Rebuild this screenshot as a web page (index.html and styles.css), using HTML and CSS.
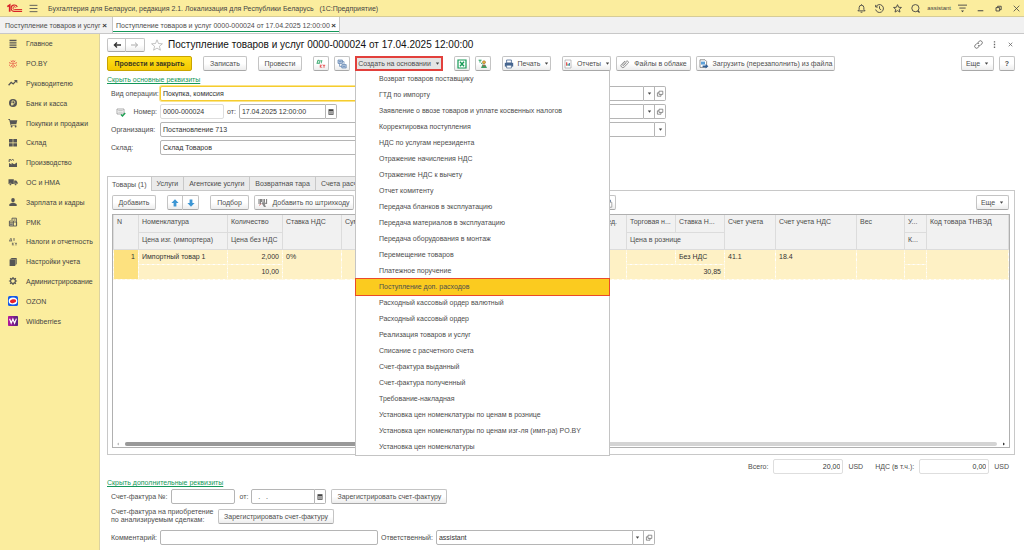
FILE: index.html
```html
<!DOCTYPE html>
<html lang="ru">
<head>
    <meta charset="UTF-8">
    <meta name="viewport" content="width=device-width, initial-scale=1.0">
    <title>Поступление товаров и услуг</title>
    <link rel="stylesheet" href="styles.css">
</head>
<body>
    <!-- shared icons -->
    <svg class="defs" aria-hidden="true">
        <symbol id="i-caret" viewBox="0 0 5 5"><path d="M0.8 1.6h3.4L2.5 3.8z" fill="#444"/></symbol>
        <symbol id="i-open" viewBox="0 0 8 8"><path d="M3 1.2h3.8v3.2H3zM3 2.8H1.4v3.4h3.6V4.4" fill="none" stroke="#666" stroke-width="0.7"/></symbol>
        <symbol id="i-cal" viewBox="0 0 8 8"><path d="M1.5 1.2h5v5.6h-5z" fill="#444"/><path d="M2.2 3h3.6v3.1H2.2z" fill="#ccc"/><path d="M2.2 4h3.6M2.2 5h3.6M3.4 3v3.1M4.6 3v3.1" stroke="#666" stroke-width="0.3"/></symbol>
    </svg>

    <header class="titlebar">
        <svg class="logo" viewBox="0 0 16 10">
            <path d="M0.8 3.6L3.2 2V8.8" fill="none" stroke="#d8232a" stroke-width="1.7"/>
            <path d="M10.8 4A3.2 3.2 0 1 0 8 8.4H15.6" fill="none" stroke="#d8232a" stroke-width="1.1"/>
            <path d="M9.2 4.6A1.4 1.4 0 1 0 8 6.5H15.6" fill="none" stroke="#d8232a" stroke-width="0.9"/>
        </svg>
        <button class="icon-btn" aria-label="Меню"><svg viewBox="0 0 8 8"><path d="M0.5 1.2h7M0.5 4h7M0.5 6.8h7" stroke="#555" stroke-width="0.8"/></svg></button>
        <span class="app-name">Бухгалтерия для Беларуси, редакция 2.1. Локализация для Республики Беларусь &nbsp; (1С:Предприятие)</span>
        <div class="title-tools">
            <button class="icon-btn" aria-label="Оповещения"><svg viewBox="0 0 8 8"><path d="M0.8 6.1h6.4L6.1 4.8V3.2a2.1 2.1 0 0 0-4.2 0v1.6zM3.2 7.3h1.6M4 0.3v0.8" fill="none" stroke="#444" stroke-width="0.8"/></svg></button>
            <button class="icon-btn" aria-label="История"><svg viewBox="0 0 8 8"><path d="M0.9 2.4a3.5 3.5 0 1 1-0.3 2.5M0.6 0.8v1.9h1.9M4 2v2.2l1.5 1" fill="none" stroke="#444" stroke-width="0.8"/></svg></button>
            <button class="icon-btn" aria-label="Избранное"><svg viewBox="0 0 8 8"><path d="M4 0.6l1 2.3 2.5 0.2-1.9 1.6 0.6 2.5L4 5.9 1.8 7.2l0.6-2.5L0.5 3.1 3 2.9z" fill="none" stroke="#444" stroke-width="0.8"/></svg></button>
            <button class="icon-btn" aria-label="Поиск"><svg viewBox="0 0 8 8"><circle cx="3.9" cy="3.7" r="3.2" fill="none" stroke="#444" stroke-width="0.8"/><path d="M6 6l1.6 1.6" stroke="#444" stroke-width="1.1"/></svg></button>
            <span class="user">assistant</span>
            <button class="icon-btn" aria-label="Настройки"><svg viewBox="0 0 8 8"><path d="M0 1h8M1.2 3.6h5.6" stroke="#444" stroke-width="0.8"/><path d="M2.6 5.8h2.8L4 7.4z" fill="#444"/></svg></button>
            <button class="icon-btn" aria-label="Свернуть"><svg viewBox="0 0 8 8"><path d="M1.5 6h5" stroke="#444" stroke-width="0.9"/></svg></button>
            <button class="icon-btn" aria-label="Развернуть"><svg viewBox="0 0 8 8"><path d="M1.8 3.2h3.2v3H1.8zM3.2 3V2h3.2v3H5.2" fill="none" stroke="#444" stroke-width="0.8"/></svg></button>
            <button class="icon-btn" aria-label="Закрыть"><svg viewBox="0 0 8 8"><path d="M1.5 1.5l5 5M6.5 1.5l-5 5" stroke="#444" stroke-width="0.7"/></svg></button>
        </div>
    </header>

    <nav class="windows">
        <a class="win" href="#">Поступление товаров и услуг <b>×</b></a>
        <a class="win win-on" href="#">Поступление товаров и услуг 0000-000024 от 17.04.2025 12:00:00 <b>×</b></a>
    </nav>

    <div class="work">
        <nav class="sidebar">
            <a href="#"><svg viewBox="0 0 10 10"><path d="M1.5 1.5h7M1.5 3.8h7M1.5 6.1h7M1.5 8.4h7" stroke="#555" stroke-width="1.3"/></svg>Главное</a>
            <a href="#"><svg viewBox="0 0 10 10"><path d="M5 1v2.4M5 6.4V9M3.6 4.6L1 3.6M6.4 4.6L9 3.6M4 6L2.4 8.2M6 6l1.6 2.2M3 1.6l1 1.7M7 1.6L6 3.3M1 6.2h1M8 6.2h1" stroke="#e2423a" stroke-width="0.8"/><circle cx="5" cy="4.9" r="0.8" fill="#e2423a"/></svg>PO.BY</a>
            <a href="#"><svg viewBox="0 0 10 10"><path d="M0.6 7.3l2.6-3 2 1.6 2.6-2.8" fill="none" stroke="#555" stroke-width="1.3"/><path d="M5.9 2h3.4v3.2z" fill="#555"/></svg>Руководителю</a>
            <a href="#"><svg viewBox="0 0 10 10"><circle cx="5" cy="5" r="4" fill="#555"/><path d="M4 7.6V2.9h1.5a1.3 1.3 0 0 1 0 2.7H3M3 6.6h2.6" fill="none" stroke="#fbed9e" stroke-width="0.8"/></svg>Банк и касса</a>
            <a href="#"><svg viewBox="0 0 10 10"><path d="M0.4 1h1.5l0.4 1.2h7L8.4 6H3.1l0.2 0.8h5v0.8H2.6L1.3 1.9H0.4z" fill="#555"/><circle cx="3.6" cy="8.5" r="0.9" fill="#555"/><circle cx="7.6" cy="8.5" r="0.9" fill="#555"/></svg>Покупки и продажи</a>
            <a href="#"><svg viewBox="0 0 10 10"><path d="M1 1h3.7v3.6H1zM5.3 1H9v3.6H5.3zM1 5.2h3.7v3.4H1zM5.3 5.2H9v3.4H5.3z" fill="#555"/></svg>Склад</a>
            <a href="#"><svg viewBox="0 0 10 10"><path d="M1 9V5l2.6 1.4V4.7l2.6 1.6L9 4.6V9z" fill="#555"/><path d="M1.2 4V1.6h1.6l0.4 1 1.2-1.2 1.6 1" fill="none" stroke="#555" stroke-width="1"/></svg>Производство</a>
            <a href="#"><svg viewBox="0 0 10 10"><path d="M0.5 2.2h5.3v4.8H0.5zM6.2 3.4h2l1.4 1.8v1.8H6.2z" fill="#555"/><circle cx="2.4" cy="7.3" r="1.1" fill="#555" stroke="#fbed9e" stroke-width="0.4"/><circle cx="7.6" cy="7.3" r="1.1" fill="#555" stroke="#fbed9e" stroke-width="0.4"/></svg>ОС и НМА</a>
            <a href="#"><svg viewBox="0 0 10 10"><ellipse cx="5" cy="3.1" rx="1.8" ry="2.2" fill="#555"/><path d="M1.3 9V7.5c0-0.8 1.8-1.2 2.6-1.8h2.2c0.8 0.6 2.6 1 2.6 1.8V9z" fill="#555"/></svg>Зарплата и кадры</a>
            <a href="#"><svg viewBox="0 0 10 10"><path d="M4 3V1.2h4.4v7.4M1.4 4h4v5h-4zM5.4 5h3.2v4H5.4M1.4 5.8h4M5.6 3h1.8" fill="none" stroke="#555" stroke-width="0.9"/><path d="M2 6.5h2.8v2H2z" fill="#777"/></svg>РМК</a>
            <a href="#"><svg viewBox="0 0 10 10"><path d="M1 4h3.2M1.7 4l0.7-2.4h1V4M5.2 1.8h1.6M6 1.8V4M4.4 5.6v2.8M6 5.6L4.6 7l1.5 1.4M7 6.3h2M8 6.3v2.2" fill="none" stroke="#555" stroke-width="0.7"/></svg>Налоги и отчетность</a>
            <a href="#"><svg viewBox="0 0 10 10"><path d="M3.2 1h5.5v6.2H7.9V1.9H3.2zM1.6 2.6h5.6V9H1.6z" fill="#555"/><path d="M2 2.2h5.6v6" fill="none" stroke="#555" stroke-width="0.6"/></svg>Настройки учета</a>
            <a href="#"><svg viewBox="0 0 10 10"><circle cx="5" cy="5" r="2.4" fill="none" stroke="#555" stroke-width="1.2"/><path d="M5 0.9v1.6M5 7.5v1.6M0.9 5h1.6M7.5 5h1.6M2.1 2.1l1.1 1.1M6.8 6.8l1.1 1.1M7.9 2.1L6.8 3.2M3.2 6.8L2.1 7.9" stroke="#555" stroke-width="1.2"/></svg>Администрирование</a>
            <a href="#"><svg viewBox="0 0 10 10"><rect width="10" height="10" rx="1.6" fill="#1459e8"/><ellipse cx="5" cy="5" rx="4.3" ry="3.6" fill="#fff"/><ellipse cx="5" cy="5.2" rx="3.1" ry="1.9" fill="#e8202c" transform="rotate(-12 5 5)"/></svg>OZON</a>
            <a href="#"><svg viewBox="0 0 10 10"><defs><linearGradient id="wb"><stop offset="0" stop-color="#b3169c"/><stop offset="1" stop-color="#54217f"/></linearGradient></defs><rect width="10" height="10" rx="0.8" fill="url(#wb)"/><path d="M1.6 2.8l1.6 4.4L4.9 3l1.7 4.2 1.8-4.6" fill="none" stroke="#fff" stroke-width="1.2"/></svg>Wildberries</a>
        </nav>

        <main class="doc">
            <div class="doc-head">
                <div class="pair">
                    <button class="btn" aria-label="Назад"><svg viewBox="0 0 8 8"><path d="M8 4H1.5M4 1.6L1.4 4 4 6.4" fill="none" stroke="#333" stroke-width="1.3"/></svg></button><button class="btn" aria-label="Вперед"><svg viewBox="0 0 8 8"><path d="M0 4h6.5M4 1.6L6.6 4 4 6.4" fill="none" stroke="#aaa" stroke-width="1"/></svg></button>
                </div>
                <svg class="star" viewBox="0 0 12 12"><path d="M6 0.8l1.5 3.7 3.9 0.3-3 2.5 1 3.9L6 9.1l-3.4 2.1 1-3.9-3-2.5 3.9-0.3z" fill="#fff" stroke="#aaa" stroke-width="0.7"/></svg>
                <h1>Поступление товаров и услуг 0000-000024 от 17.04.2025 12:00:00</h1>
                <div class="doc-tools">
                    <button class="icon-btn" aria-label="Ссылка"><svg viewBox="0 0 8 8"><path d="M3.4 2.4l1.2-1.2a1.6 1.6 0 0 1 2.3 2.3L5.6 4.8a1.5 1.5 0 0 1-2.1 0M4.6 5.6L3.4 6.8a1.6 1.6 0 0 1-2.3-2.3l1.3-1.3a1.5 1.5 0 0 1 2.1 0" fill="none" stroke="#666" stroke-width="0.8"/></svg></button>
                    <button class="icon-btn" aria-label="Еще"><svg viewBox="0 0 8 8"><path d="M3.4 1h1.2v1.2H3.4zM3.4 3.4h1.2v1.2H3.4zM3.4 5.8h1.2V7H3.4z" fill="#666"/></svg></button>
                    <button class="icon-btn" aria-label="Закрыть"><svg viewBox="0 0 8 8"><path d="M2.4 2.4l3.2 3.2M5.6 2.4L2.4 5.6" stroke="#666" stroke-width="0.7"/></svg></button>
                </div>
            </div>

            <div class="toolbar">
                <button class="btn btn-main">Провести и закрыть</button>
                <button class="btn w-write">Записать</button>
                <button class="btn w-write">Провести</button>
                <div class="group">
                    <button class="btn sq" aria-label="ДтКт"><svg viewBox="0 0 10 10"><path d="M0.6 4.3h3.2M1.2 4.2l0.6-2.9h1.5v2.9M4.2 1.8h2.2M5.3 1.8v2.5" fill="none" stroke="#169a56" stroke-width="0.8"/><path d="M4.3 5.6v3.2M6 5.6L4.5 7.2 6 8.8M6.8 6.3H9.2M8 6.3v2.5" fill="none" stroke="#e23a3a" stroke-width="0.8"/></svg></button>
                    <button class="btn sq" aria-label="Структура подчиненности"><svg viewBox="0 0 10 10"><path d="M1 1h4.4v3.4H1zM4.8 5.6h4.4V9H4.8z" fill="#b9cbe2" stroke="#5a7fae" stroke-width="0.7"/><path d="M2.6 4.4v3h2.2M7 5.6V2.6H5.4M2 2.6h2.4M5.8 7.4h2.4" fill="none" stroke="#5a7fae" stroke-width="0.7"/></svg></button>
                    <div class="drop">
                        <button class="btn btn-open">Создать на основании <svg class="caret"><use href="#i-caret"/></svg></button>
                        <ul class="menu">
                            <li>Возврат товаров поставщику</li>
                            <li>ГТД по импорту</li>
                            <li>Заявление о ввозе товаров и уплате косвенных налогов</li>
                            <li>Корректировка поступления</li>
                            <li>НДС по услугам нерезидента</li>
                            <li>Отражение начисления НДС</li>
                            <li>Отражение НДС к вычету</li>
                            <li>Отчет комитенту</li>
                            <li>Передача бланков в эксплуатацию</li>
                            <li>Передача материалов в эксплуатацию</li>
                            <li>Передача оборудования в монтаж</li>
                            <li>Перемещение товаров</li>
                            <li>Платежное поручение</li>
                            <li class="current">Поступление доп. расходов</li>
                            <li>Расходный кассовый ордер валютный</li>
                            <li>Расходный кассовый ордер</li>
                            <li>Реализация товаров и услуг</li>
                            <li>Списание с расчетного счета</li>
                            <li>Счет-фактура выданный</li>
                            <li>Счет-фактура полученный</li>
                            <li>Требование-накладная</li>
                            <li>Установка цен номенклатуры по ценам в рознице</li>
                            <li>Установка цен номенклатуры по ценам изг-ля (имп-ра) PO.BY</li>
                            <li>Установка цен номенклатуры</li>
                        </ul>
                    </div>
                </div>
                <div class="group">
                    <button class="btn sq" aria-label="Excel"><svg viewBox="0 0 10 10"><path d="M1 1h8v8H1z" fill="#fff" stroke="#169a56" stroke-width="1.2"/><path d="M3 2.8l4 4.4M7 2.8L3 7.2" stroke="#169a56" stroke-width="1.4"/></svg></button>
                    <button class="btn sq" aria-label="Сотрудники"><svg viewBox="0 0 10 10"><path d="M0.6 1.2h3M2 1.2v2.4M3 4l1.6 1" stroke="#169a56" stroke-width="0.9"/><circle cx="6" cy="3.2" r="1.5" fill="#e8b23a" stroke="#8a5a1e" stroke-width="0.5"/><path d="M3 9l1.4-3.2h3L9 9z" fill="#3f9d63"/><path d="M5 5.8h1.8L6 8z" fill="#e2423a"/></svg></button>
                </div>
                <button class="btn w-print"><svg viewBox="0 0 10 10"><path d="M2.6 1h4.8v3H2.6z" fill="#fff" stroke="#46658f" stroke-width="0.8"/><path d="M0.8 3.8h8.4v3.8H0.8z" fill="#46658f"/><path d="M2.6 6.2h4.8V9H2.6z" fill="#fff" stroke="#46658f" stroke-width="0.7"/></svg>Печать <svg class="caret"><use href="#i-caret"/></svg></button>
                <div class="group">
                    <button class="btn w-print"><svg viewBox="0 0 10 10"><path d="M2 1h6v8H2z" fill="#fff" stroke="#999" stroke-width="0.6"/><path d="M3.7 3.2v3.6" stroke="#e23a3a" stroke-width="1.1"/><path d="M5.1 4.8v2" stroke="#169a56" stroke-width="1"/><path d="M6.4 4v2.8" stroke="#3f6fb5" stroke-width="1"/></svg>Отчеты <svg class="caret"><use href="#i-caret"/></svg></button>
                    <button class="btn w-files"><svg viewBox="0 0 10 10"><path d="M2 6.4l4.2-4a1.3 1.3 0 0 1 1.9 1.8L4.2 8a1.9 1.9 0 0 1-2.7-2.7L5 2M3.2 6.8l3.4-3.2" fill="none" stroke="#777" stroke-width="0.8"/></svg>Файлы в облаке</button>
                    <button class="btn w-load"><svg viewBox="0 0 10 10"><path d="M1 0.8h5l1.6 1.6v6H1z" fill="#fff" stroke="#666" stroke-width="0.7"/><path d="M2 2.6h4v3H2z" fill="#5ca0d8"/><path d="M3.6 6.4h3V5l2.8 2.3-2.8 2.3V8.2h-3z" fill="#2f5f96"/></svg>Загрузить (перезаполнить) из файла</button>
                </div>
                <div class="group right">
                    <button class="btn w-more">Еще <svg class="caret"><use href="#i-caret"/></svg></button>
                    <button class="btn sq"><b>?</b></button>
                </div>
            </div>

            <a class="toggle" href="#">Скрыть основные реквизиты</a>

            <div class="props">
                <div class="props-col">
                    <div class="row">
                        <label class="lab" for="op">Вид операции:</label>
                        <input class="field grow focus" id="op" value="Покупка, комиссия">
                    </div>
                    <div class="row">
                        <label class="lab lab-num" for="num"><svg viewBox="0 0 10 10"><path d="M1 2h7v5H1z" fill="#fff" stroke="#888" stroke-width="0.7"/><path d="M2.2 3.6h4.6M2.2 5.2h4.6" stroke="#999" stroke-width="0.6"/><path d="M5 7.4l1.5 1.6L9.2 6" fill="none" stroke="#1da053" stroke-width="1.4"/></svg>Номер:</label>
                        <input class="field pale w-num" id="num" value="0000-000024">
                        <label for="date">от:</label>
                        <span class="combo w-date"><input class="field" id="date" value="17.04.2025 12:00:00"><button aria-label="Календарь"><svg><use href="#i-cal"/></svg></button></span>
                    </div>
                    <div class="row">
                        <label class="lab" for="org">Организация:</label>
                        <input class="field grow" id="org" value="Постановление 713">
                    </div>
                    <div class="row">
                        <label class="lab" for="store">Склад:</label>
                        <input class="field grow" id="store" value="Склад Товаров">
                    </div>
                </div>
                <div class="props-col props-right">
                    <span class="combo"><input class="field" aria-label="Контрагент"><button aria-label="Выбрать"><svg class="caret"><use href="#i-caret"/></svg></button><button aria-label="Открыть"><svg><use href="#i-open"/></svg></button></span>
                    <span class="combo"><input class="field" aria-label="Договор"><button aria-label="Выбрать"><svg class="caret"><use href="#i-caret"/></svg></button><button aria-label="Открыть"><svg><use href="#i-open"/></svg></button></span>
                    <span class="combo"><input class="field" aria-label="Зачет аванса"><button aria-label="Выбрать"><svg class="caret"><use href="#i-caret"/></svg></button></span>
                </div>
            </div>

            <div class="tabs">
                <button class="tab tab-on">Товары (1)</button>
                <button class="tab">Услуги</button>
                <button class="tab">Агентские услуги</button>
                <button class="tab">Возвратная тара</button>
                <button class="tab">Счета расчетов</button>
            </div>

            <section class="panel">
                <div class="toolbar panel-bar">
                    <button class="btn w-write">Добавить</button>
                    <div class="pair pair-small">
                        <button class="btn" aria-label="Вверх"><svg viewBox="0 0 8 8"><path d="M4 0.3L7.6 4H5.4v3.6H2.6V4H0.4z" fill="#3d96d4"/></svg></button><button class="btn" aria-label="Вниз"><svg viewBox="0 0 8 8"><path d="M4 7.7L7.6 4H5.4V0.4H2.6V4H0.4z" fill="#3d96d4"/></svg></button>
                    </div>
                    <div class="group">
                        <button class="btn w-pick">Подбор</button>
                        <button class="btn w-scan"><svg viewBox="0 0 10 10"><path d="M1 1v5M2.4 1v5M3.4 1v3M5 1v4M6.4 1v3M8.6 1v5" stroke="#555" stroke-width="0.8"/><path d="M3.4 5l3.4-1 1.4 1.4-1.4 1.2L8 9H6L4.8 7z" fill="#8a8a8a"/><path d="M1 7.4l2.4-1.6" stroke="#b33" stroke-width="0.6"/></svg>Добавить по штрихкоду</button>
                    </div>
                    <button class="btn sq paste" aria-label="Вставить"><svg viewBox="0 0 10 10"><path d="M1 2h6.4v7H1z" fill="#fff" stroke="#46658f" stroke-width="0.8"/><path d="M3 1h3v1.8H3z" fill="#46658f"/><path d="M5 4.2h3.8v5H5z" fill="#fff" stroke="#888" stroke-width="0.7"/></svg></button>
                    <button class="btn w-more right">Еще <svg class="caret"><use href="#i-caret"/></svg></button>
                </div>

                <div class="grid">
                    <table>
                        <colgroup>
                            <col class="c-n"><col class="c-name"><col class="c-qty"><col class="c-rate"><col class="c-sum"><col class="c-unit"><col class="c-mark"><col class="c-mark"><col class="c-acc"><col class="c-accv"><col class="c-wt"><col class="c-u"><col>
                        </colgroup>
                        <thead>
                            <tr>
                                <th rowspan="2">N</th><th>Номенклатура</th><th>Количество</th><th rowspan="2">Ставка НДС</th><th rowspan="2">Сумма</th><th rowspan="2" class="num unit">ед.</th><th>Торговая н...</th><th>Ставка Н...</th><th rowspan="2">Счет учета</th><th rowspan="2">Счет учета НДС</th><th rowspan="2">Вес</th><th>У...</th><th rowspan="2">Код товара ТНВЭД</th>
                            </tr>
                            <tr>
                                <th>Цена изг. (импортера)</th><th>Цена без НДС</th><th colspan="2">Цена в рознице</th><th>К...</th>
                            </tr>
                        </thead>
                        <tbody>
                            <tr>
                                <td rowspan="2" class="num cell-n">1</td><td>Импортный товар 1</td><td class="num">2,000</td><td rowspan="2">0%</td><td rowspan="2"></td><td rowspan="2"></td><td></td><td>Без НДС</td><td rowspan="2">41.1</td><td rowspan="2">18.4</td><td rowspan="2"></td><td></td><td rowspan="2"></td>
                            </tr>
                            <tr>
                                <td></td><td class="num">10,00</td><td colspan="2" class="num">30,85</td><td></td>
                            </tr>
                        </tbody>
                    </table>
                    <div class="scroll">
                        <svg viewBox="0 0 4 4"><path d="M3 0.6v2.8L1 2z" fill="#bbb"/></svg>
                        <div class="track"><div class="thumb"></div></div>
                        <svg viewBox="0 0 4 4"><path d="M1 0.4v3.2L3 2z" fill="#333"/></svg>
                    </div>
                </div>
            </section>

            <div class="row totals">
                <label for="total">Всего:</label>
                <input class="field pale num" id="total" value="20,00">
                <span>USD</span>
                <label class="lab-vat" for="vat">НДС (в т.ч.):</label>
                <input class="field pale num" id="vat" value="0,00">
                <span>USD</span>
            </div>

            <a class="toggle" href="#">Скрыть дополнительные реквизиты</a>

            <div class="row extra">
                <label for="inv">Счет-фактура №:</label>
                <input class="field w-inv" id="inv">
                <label class="lab-from" for="invdate">от:</label>
                <span class="combo w-invdate"><input class="field" id="invdate" value="  .   ."><button aria-label="Календарь"><svg><use href="#i-cal"/></svg></button></span>
                <button class="btn w-reg">Зарегистрировать счет-фактуру</button>
            </div>
            <div class="row extra extra-two">
                <span class="two">Счет-фактура на приобретение<br>по анализируемым сделкам:</span>
                <button class="btn w-reg">Зарегистрировать счет-фактуру</button>
            </div>
            <div class="row extra">
                <label class="lab" for="note">Комментарий:</label>
                <input class="field w-note" id="note">
                <label for="resp">Ответственный:</label>
                <span class="combo w-resp"><input class="field" id="resp" value="assistant"><button aria-label="Выбрать"><svg class="caret"><use href="#i-caret"/></svg></button><button aria-label="Открыть"><svg><use href="#i-open"/></svg></button></span>
            </div>
        </main>
    </div>
</body>
</html>
```
FILE: styles.css
```css
* {box-sizing: border-box;}

body {
    margin: 0;
    min-height: 100vh;
    display: flex;
    flex-direction: column;
    font-family: "Liberation Sans", Arial, sans-serif;
    font-size: 7px;
    line-height: 9px;
    color: #4d4d4d;
    background: #fff;
}

button, input {
    font: inherit;
    color: inherit;
    margin: 0;
}

a {color: inherit; text-decoration: none;}
svg {display: block; flex: none; width: 10px; height: 10px;}
.defs {position: absolute; width: 0; height: 0;}
.caret {width: 5px; height: 5px;}
.num {text-align: right;}
.right {margin-left: auto;}

/* Title bar */
.titlebar {
    display: flex;
    align-items: center;
    height: 17px;
    padding: 0 3px 0 6px;
    background: #fbed9e;
    border-bottom: 1px solid #d6cc97;
    color: #444;
}
.logo {width: 17px; height: 10px; margin-right: 6px;}
.icon-btn {
    padding: 0;
    border: none;
    background: none;
    cursor: pointer;
}
.icon-btn svg {width: 9px; height: 9px;}
.app-name {margin-left: 10px; white-space: nowrap;}
.title-tools {
    display: flex;
    align-items: center;
    gap: 9px;
    margin-left: auto;
}
.user {font-size: 6px; margin: 0 -2px;}

/* Open windows */
.windows {
    display: flex;
    height: 17px;
    background: #f1f1f1;
    border-bottom: 1px solid #c8c8c8;
}
.win {
    display: flex;
    justify-content: space-between;
    width: 113px;
    padding: 4px 5px;
    border-right: 1px solid #c8c8c8;
    white-space: nowrap;
}
.win b {color: #333; font-size: 8px;}
.win-on {
    width: 227px;
    padding: 4px 3px;
    background: #fff;
    box-shadow: inset 0 -1px 0 #fff, inset 0 -2px 0 #14985a;
}

/* Sections */
.work {
    display: flex;
    flex: 1;
    background: linear-gradient(to right, #fbed9e 99px, #dcd3a0 99px, #dcd3a0 100px, #fff 100px);
}
.sidebar {
    display: grid;
    grid-template-rows: repeat(15, 1fr);
    height: 297px;
    flex: none;
    width: 99px;
}
.sidebar a {
    display: flex;
    align-items: center;
    gap: 8px;
    padding-left: 8px;
    white-space: nowrap;
    color: #444;
}

/* Document */
.doc {
    flex: 1;
    min-width: 0;
    display: flex;
    flex-direction: column;
    padding: 3px 9px 5px 8px;
}
.doc-head {
    display: flex;
    align-items: center;
    height: 15px;
    margin-bottom: 4px;
}
.doc-head h1 {
    margin: 0;
    font-size: 10px;
    font-weight: normal;
    color: #111;
    white-space: nowrap;
}
.star {width: 12px; height: 12px; margin: 0 5px 0 6px;}
.doc-tools {
    display: flex;
    gap: 7px;
    margin-left: auto;
}

.btn {
    display: flex;
    align-items: center;
    justify-content: center;
    gap: 4px;
    height: 15px;
    padding: 0 3px;
    border: 1px solid #c4c4c4;
    border-bottom-color: #a8a8a8;
    border-radius: 2px;
    background: linear-gradient(#fff 50%, #ededed);
    white-space: nowrap;
    cursor: pointer;
}
.btn-main {
    width: 85px;
    border-color: #c9a400;
    background: linear-gradient(#ffe01a, #f3c800);
    font-weight: bold;
    color: #3d3a20;
}
.btn-open {
    width: 88px;
    padding: 0;
    border: 2px solid #e2403c;
    border-radius: 0;
    background: #e4e4e4;
}
.sq {width: 16px; padding: 0;}
.w-write {width: 44px;}
.w-print {width: 49px;}
.w-files {width: 75px;}
.w-load {width: 139px;}
.w-more {width: 33px;}
.w-pick {width: 39px;}
.w-scan {width: 100px;}
.w-reg {width: 116px; margin-left: 2px;}

.pair {display: flex;}
.pair .btn {width: 19px; height: 14px; padding: 0;}
.pair .btn:first-child {border-radius: 2px 0 0 2px;}
.pair .btn:last-child {border-left: none; border-radius: 0 2px 2px 0;}
.pair svg {width: 8px; height: 8px;}
.pair-small .btn {width: 16px; height: 15px;}

.toolbar {
    display: flex;
    align-items: center;
    gap: 11px;
}
.group {display: flex; gap: 5px;}

/* Drop-down under the button */
.drop {position: relative;}
.menu {
    position: absolute;
    top: 100%;
    left: 0;
    z-index: 10;
    width: 255px;
    margin: 0;
    padding: 0;
    list-style: none;
    background: #fff;
    border: 1px solid #c4c4c4;
    border-top: none;
}
.menu li {
    height: 16px;
    padding-left: 23px;
    line-height: 16px;
    white-space: nowrap;
}
.menu .current {
    background: #fbcb1f;
    box-shadow: 0 0 0 1px #ea4a2a;
}

.toggle {
    align-self: flex-start;
    margin-top: 4px;
    color: #14985a;
    text-decoration: underline;
}

/* Header fields */
.props {
    display: flex;
    gap: 100px;
    padding-left: 4px;
    margin-top: 2px;
}
.props-col {
    display: flex;
    flex-direction: column;
    gap: 3px;
    width: 300px;
}
.props-right {width: 155px;}
.row {
    display: flex;
    align-items: center;
    gap: 3px;
}
.lab {width: 46px; white-space: nowrap;}
.lab-num {
    display: flex;
    align-items: center;
    justify-content: flex-end;
    gap: 8px;
}
.field {
    height: 15px;
    min-width: 0;
    padding: 0 2px;
    border: 1px solid #b5b5b5;
    border-radius: 2px;
    background: #fff;
    color: #333;
}
.grow {flex: 1;}
.pale {border-color: #dedede;}
.focus {border: 1px solid #f5cc2e; box-shadow: 0 0 0 1px #fbe48a;}
.w-num {width: 64px;}
.combo {display: flex; height: 15px;}
.combo .field {flex: 1; border-radius: 2px 0 0 2px;}
.combo button {
    display: flex;
    align-items: center;
    justify-content: center;
    width: 11px;
    padding: 0;
    border: 1px solid #b5b5b5;
    border-left: none;
    background: #fff;
}
.combo button:last-child {border-radius: 0 2px 2px 0;}
.combo svg {width: 8px; height: 8px;}
.combo .caret {width: 5px; height: 5px;}
.w-date {width: 98px;}

/* Tabs */
.tabs {
    display: flex;
    margin-top: 21px;
}
.tab {
    height: 14px;
    padding: 0 5px;
    border: 1px solid #c8c8c8;
    border-left: none;
    border-bottom: none;
    background: #ebebeb;
    white-space: nowrap;
}
.tab-on {
    height: 15px;
    margin-bottom: -1px;
    padding: 0 4px;
    border-left: 1px solid #c8c8c8;
    background: #fff;
    z-index: 1;
}
.panel {
    flex: 1;
    display: flex;
    flex-direction: column;
    padding: 4px 4px 6px 4px;
    border: 1px solid #c8c8c8;
}
.panel-bar {margin: 0 1px 4px 0;}
.paste {margin-left: 235px;}

.grid {
    flex: 1;
    display: flex;
    flex-direction: column;
    border: 1px solid #b0b0b0;
}
table {
    width: 100%;
    table-layout: fixed;
    border-collapse: collapse;
}
th, td {
    height: 15px;
    padding: 0 3px;
    overflow: hidden;
    white-space: nowrap;
    text-align: left;
    font-weight: normal;
    vertical-align: top;
    line-height: 14px;
}
th {
    height: 17px;
    background: #f1f1f1;
    border: 1px solid #dcdcdc;
    border-top: none;
}
td {
    background: #fef1c5;
    border: 1px dashed #fff8e0;
    color: #333;
}
td.cell-n {background: #fde17f;}
th.num, td.num {text-align: right;}
th.unit {padding-right: 9px;}
.c-n {width: 25px;}
.c-name {width: 89px;}
.c-qty {width: 55px;}
.c-rate {width: 59px;}
.c-sum {width: 50px;}
.c-unit {width: 235px;}
.c-mark {width: 49px;}
.c-acc {width: 51px;}
.c-accv {width: 81px;}
.c-wt {width: 48px;}
.c-u {width: 22px;}

.scroll {
    display: flex;
    align-items: center;
    gap: 5px;
    margin-top: auto;
    padding: 1px 3px;
}
.scroll svg {width: 4px; height: 4px;}
.track {
    flex: 1;
    height: 4px;
    border-radius: 2px;
    background: #d4d4d4;
}
.thumb {
    width: 50%;
    height: 4px;
    border-radius: 2px;
    background: #999;
}

/* Totals and footer fields */
.totals {
    justify-content: flex-end;
    gap: 5px;
    margin-top: 4px;
    padding-right: 6px;
}
.totals .field {width: 70px;}
.lab-vat {margin-left: 7px;}
.extra {padding-left: 4px; margin-top: 2px;}
.extra-two {margin: 4px 0;}
.two {width: 102px; line-height: 8px; white-space: nowrap;}
.w-inv {width: 64px;}
.lab-from {margin-left: 2px;}
.w-invdate {width: 75px;}
.w-note {width: 218px;}
.w-resp {width: 219px;}
```
